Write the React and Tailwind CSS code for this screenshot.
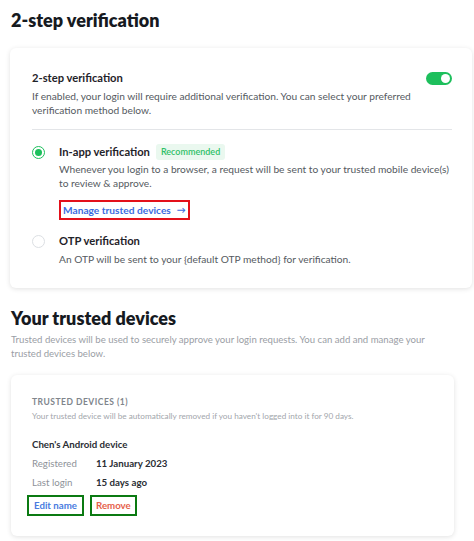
import { useState } from 'react';

export default function App() {
  const [enabled, setEnabled] = useState(true);
  const [method, setMethod] = useState('app');

  return (
    <div className="min-h-screen bg-white text-[#1f2329]" style={{ fontFamily: 'Lato, "Open Sans", sans-serif' }}>
      <div className="pl-[10px] pr-[2px] pt-[8px]">
        <h1 className="pl-[1px] text-[18px] font-extrabold leading-[24px] text-[#161a1f]">2-step verification</h1>

        {/* 2-step card */}
        <div className="mt-[16px] rounded-[6px] bg-white pl-[22px] pr-[20px] pt-[22px] pb-[22px] shadow-[0_1px_5px_rgba(0,0,0,0.12)]">
          <div className="flex items-start justify-between">
            <div>
              <p className="text-[11.2px] font-bold leading-[16px]">2-step verification</p>
              <p className="mt-[3px] text-[10.2px] leading-[14px] text-[#555a61]">
                If enabled, your login will require additional verification. You can select your preferred verification method below.
              </p>
            </div>
            <button
              onClick={() => setEnabled(!enabled)}
              className={`mt-[2px] ml-3 flex h-[13px] w-[26px] shrink-0 items-center rounded-full px-[2px] ${enabled ? 'justify-end bg-[#1dbf5c]' : 'justify-start bg-gray-300'}`}
            >
              <span className="block h-[9px] w-[9px] rounded-full bg-white" />
            </button>
          </div>

          <div className="mt-[12px] h-px bg-[#e3e5e8]" />

          <div className="mt-[14px] flex gap-[14px]">
            <Radio checked={method === 'app'} onClick={() => setMethod('app')} />
            <div>
              <div className="flex items-center gap-[6px]">
                <p className="text-[11.2px] font-bold leading-[16px]">In-app verification</p>
                <span className="rounded-[3px] bg-[#eaf8ef] px-[5px] py-[2px] text-[9px] leading-[12px] font-semibold text-[#2fbf68]">Recommended</span>
              </div>
              <p className="mt-[2px] text-[10.2px] leading-[14px] text-[#555a61]">
                Whenever you login to a browser, a request will be sent to your trusted mobile device(s) to review &amp; approve.
              </p>
              <a className="mt-[10px] inline-flex items-center gap-[6px] border-2 border-[#e3101a] px-[2px] py-[1px] text-[10.2px] font-bold leading-[14px] text-[#3a6be0]">
                Manage trusted devices <span className="text-[9px]">→</span>
              </a>
            </div>
          </div>

          <div className="mt-[13px] flex gap-[14px]">
            <Radio checked={method === 'otp'} onClick={() => setMethod('otp')} />
            <div>
              <p className="text-[11.2px] font-bold leading-[16px]">OTP verification</p>
              <p className="mt-[3px] text-[10.2px] leading-[14px] text-[#555a61]">
                An OTP will be sent to your {'{default OTP method}'} for verification.
              </p>
            </div>
          </div>
        </div>

        {/* Trusted devices */}
        <h2 className="mt-[18px] pl-[1px] text-[18px] font-extrabold leading-[24px] text-[#161a1f]">Your trusted devices</h2>
        <p className="mt-[3px] pl-[1px] pr-[20px] text-[9.6px] leading-[14px] text-[#9a9ea5]">
          Trusted devices will be used to securely approve your login requests. You can add and manage your trusted devices below.
        </p>

        <div className="mt-[14px] mr-[18px] ml-[1px] rounded-[6px] bg-white pl-[21px] pr-[20px] pt-[21px] pb-[20px] shadow-[0_1px_5px_rgba(0,0,0,0.12)]">
          <p className="text-[8.5px] font-bold uppercase tracking-[0.5px] leading-[12px] text-[#80858c]">Trusted devices (1)</p>
          <p className="mt-[3px] text-[8.2px] leading-[11px] text-[#a2a6ac]">
            Your trusted device will be automatically removed if you haven't logged into it for 90 days.
          </p>
          <p className="mt-[15px] text-[9.7px] font-bold leading-[14px] text-[#2a2e34]">Chen's Android device</p>
          <div className="mt-[5px] grid grid-cols-[64px_1fr] gap-y-[5px] text-[9.7px] leading-[14px]">
            <span className="text-[#8e9299]">Registered</span>
            <span className="font-bold text-[#2a2e34]">11 January 2023</span>
            <span className="text-[#8e9299]">Last login</span>
            <span className="font-bold text-[#2a2e34]">15 days ago</span>
          </div>
          <div className="mt-[6px] ml-[-5px] flex gap-[6px]">
            <button className="border-2 border-[#0b7a12] px-[5px] py-[2px] text-[9.7px] font-bold leading-[13px] text-[#4a7be0]">Edit name</button>
            <button className="border-2 border-[#0b7a12] px-[4px] py-[2px] text-[9.7px] font-bold leading-[13px] text-[#e5604a]">Remove</button>
          </div>
        </div>
      </div>
    </div>
  );
}

function Radio({ checked, onClick }) {
  return (
    <button
      onClick={onClick}
      className={`mt-[2px] flex h-[13px] w-[13px] shrink-0 items-center justify-center rounded-full border-[1.5px] ${checked ? 'border-[#1dbf5c]' : 'border-[#dcdfe3]'}`}
    >
      {checked && <span className="block h-[7px] w-[7px] rounded-full bg-[#1dbf5c]" />}
    </button>
  );
}
